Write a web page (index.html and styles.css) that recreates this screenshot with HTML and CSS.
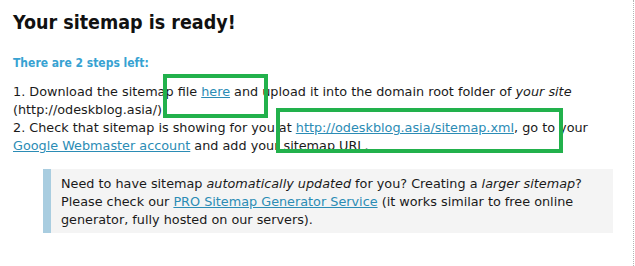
FILE: index.html
```html
<!DOCTYPE html>
<html lang="en">
<head>
  <meta charset="UTF-8" />
  <title>Sitemap ready</title>
  <link rel="stylesheet" href="styles.css">
</head>
<body>
  <div class="page">
    <h1 class="title">Your sitemap is ready!</h1>
    <h3 class="steps">There are 2 steps left:</h3>
    <p class="instructions">
      1. Download the sitemap file <a href="#">here</a> and upload it into the domain root folder of <em>your site</em><br>
      (http://odeskblog.asia/).<br>
      2. Check that sitemap is showing for you at <a href="#">http://odeskblog.asia/sitemap.xml</a>, go to your<br>
      <a href="#">Google Webmaster account</a> and add your sitemap URL.
    </p>
    <div class="note">
      Need to have sitemap <em>automatically updated</em> for you? Creating a <em>larger sitemap</em>?<br>
      Please check our <a href="#">PRO Sitemap Generator Service</a> (it works similar to free online<br>
      generator, fully hosted on our servers).
    </div>

    <!-- highlight boxes drawn over the text -->
    <div class="mark mark-here"></div>
    <div class="mark mark-url"></div>
  </div>
</body>
</html>
```

FILE: styles.css
```css
body {
  margin: 0;
  font-family: "DejaVu Sans", sans-serif;
  color: #1a1a1a;
  background: #fff;
}
.page {
  position: relative;
  width: 634px;
  height: 266px;
  padding-left: 13px;
  box-sizing: border-box;
  border-right: 1px dotted #b5b5b5;
}
.title {
  margin: 0;
  padding-top: 10px;
  font-family: "DejaVu Sans Condensed", "DejaVu Sans", sans-serif;
  font-stretch: condensed;
  font-size: 19.5px;
  line-height: 26px;
  font-weight: bold;
  color: #111;
}
.steps {
  margin: 0;
  padding-top: 18px;
  font-family: "DejaVu Sans Condensed", "DejaVu Sans", sans-serif;
  font-stretch: condensed;
  font-size: 12px;
  line-height: 18px;
  font-weight: bold;
  color: #37a2d2;
}
.instructions {
  margin: 11px 0 0;
  font-size: 12.8px;
  line-height: 18px;
}
a {
  color: #2b8cb5;
}
.note {
  margin: 14px 0 0 30px;
  width: 570px;
  box-sizing: border-box;
  padding: 6px 8px 4px 10px;
  border-left: 8px solid #a9cde0;
  background: #f4f4f4;
  font-size: 12.8px;
  line-height: 18px;
}
.mark {
  position: absolute;
  border: 4px solid #22b14c;
  box-sizing: border-box;
}
.mark-here {
  left: 163px;
  top: 74px;
  width: 105px;
  height: 44px;
}
.mark-url {
  left: 276px;
  top: 108px;
  width: 287px;
  height: 45px;
}
```
